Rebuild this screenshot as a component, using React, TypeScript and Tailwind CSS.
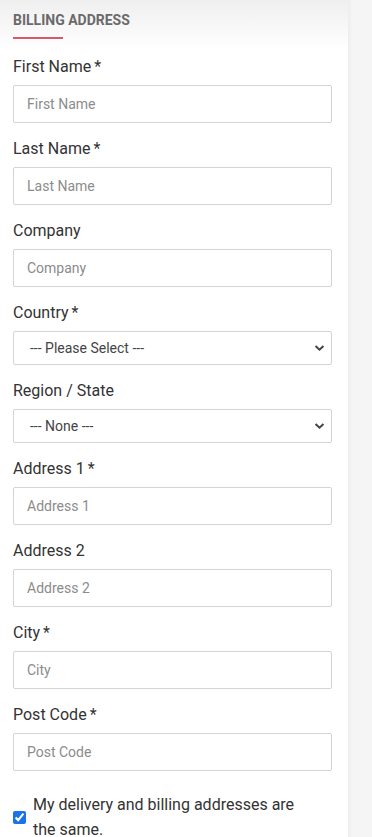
import React from 'react';

const fields: { label: string; required?: boolean; type: 'input' | 'select'; placeholder: string }[] = [
  { label: 'First Name', required: true, type: 'input', placeholder: 'First Name' },
  { label: 'Last Name', required: true, type: 'input', placeholder: 'Last Name' },
  { label: 'Company', type: 'input', placeholder: 'Company' },
  { label: 'Country', required: true, type: 'select', placeholder: '--- Please Select ---' },
  { label: 'Region / State', type: 'select', placeholder: '--- None ---' },
  { label: 'Address 1', required: true, type: 'input', placeholder: 'Address 1' },
  { label: 'Address 2', type: 'input', placeholder: 'Address 2' },
  { label: 'City', required: true, type: 'input', placeholder: 'City' },
  { label: 'Post Code', required: true, type: 'input', placeholder: 'Post Code' },
];

const Chevron = () => (
  <svg className="pointer-events-none absolute right-[7px] top-1/2 -translate-y-1/2" width="11" height="7" viewBox="0 0 11 7">
    <path d="M1.5 1.5 L5.5 5.2 L9.5 1.5" fill="none" stroke="#444" strokeWidth="2" />
  </svg>
);

export default function App() {
  return (
    <div className="flex min-h-[837px] w-[372px] bg-white font-['Roboto',sans-serif]">
      <div className="w-[348px] bg-gradient-to-b from-[#efefef] to-white to-[50px] px-[13px] pt-[11px]">
        {/* Heading */}
        <h3 className="text-[14px] font-bold uppercase leading-[18px] text-[#6a6a6a]">Billing Address</h3>
        <div className="mt-[8px] h-[2px] w-[50px] bg-[#d9596b]" />

        <div className="mt-[16px] flex flex-col">
          {fields.map((f) => (
            <div key={f.label} className="mb-[14px] flex flex-col">
              <label className="h-[24px] text-[16px] leading-[24px] text-[#333]">
                {f.label}
                {f.required && <span className="ml-[3px]">*</span>}
              </label>
              {f.type === 'input' ? (
                <input
                  className="mt-[6px] h-[38px] w-[319px] rounded-[2px] border border-[#d4d4d4] bg-white px-[13px] text-[14px] text-[#333] outline-none placeholder:text-[#8c8c8c]"
                  placeholder={f.placeholder}
                />
              ) : (
                <div className="relative mt-[6px] w-[319px]">
                  <select className="h-[34px] w-full appearance-none rounded-[2px] border border-[#d4d4d4] bg-white px-[16px] text-[14px] text-[#444] outline-none">
                    <option>{f.placeholder}</option>
                  </select>
                  <Chevron />
                </div>
              )}
            </div>
          ))}
        </div>

        {/* Same address */}
        <label className="mt-[7px] flex items-center gap-[7px]">
          <input type="checkbox" defaultChecked className="h-[13px] w-[13px] shrink-0 accent-[#1a73e8]" />
          <span className="w-[270px] text-[16px] leading-[25px] text-[#333]">
            My delivery and billing addresses are the same.
          </span>
        </label>
      </div>
      <div className="w-[24px] bg-gradient-to-r from-[#ececec] to-[#f5f5f5] to-[4px]" />
    </div>
  );
}
